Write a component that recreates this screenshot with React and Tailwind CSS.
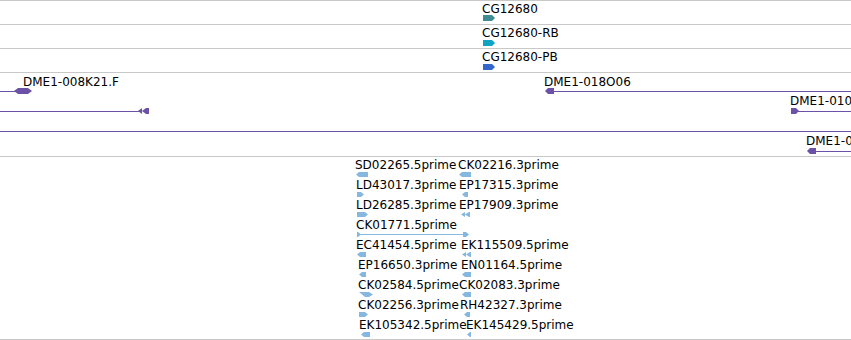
import React from "react";

const PURPLE = "#6c52a6";
const EST = "#86b7de";

function shapePoints(type, w, h) {
  const m = h / 2;
  switch (type) {
    case "right":
      return [`0,0 ${w - 3},0 ${w},${m} ${w - 3},${h} 0,${h}`];
    case "left":
      return [`0,${m} 3,0 ${w},0 ${w},${h} 3,${h}`];
    case "both":
      return [`0,${m} 4,0 ${w - 4},0 ${w},${m} ${w - 4},${h} 4,${h}`];
    case "dleft":
      return [`0,${m} 4,0 4,${h}`, `4,${m} 8,0 ${w},0 ${w},${h} 8,${h}`];
    case "dright":
      return [`0,0 ${w - 8},0 ${w - 4},${m} ${w - 8},${h}`, `${w - 8},0 ${w - 4},0 ${w},${m} ${w - 4},${h} ${w - 8},${h}`];
    default:
      return [`0,0 ${w},0 ${w},${h} 0,${h}`];
  }
}

function Glyph({ x, y, w, h, type, color }) {
  return (
    <svg
      className="absolute block"
      width={w}
      height={h}
      viewBox={`0 0 ${w} ${h}`}
      style={{ left: x, top: y }}
    >
      {shapePoints(type, w, h).map((p, i) => (
        <polygon key={i} points={p} fill={color} />
      ))}
    </svg>
  );
}

function Line({ x, y, w, color }) {
  return (
    <div className="absolute h-px" style={{ left: x, top: y, width: w, background: color }} />
  );
}

function Label({ x, y, children }) {
  return (
    <div className="absolute whitespace-nowrap" style={{ left: x, top: y }}>
      {children}
    </div>
  );
}

function GeneTrack({ name, color, gy }) {
  return (
    <div className="relative h-[24px] border-b border-[#c8c8c8]">
      <Label x={482} y={1}>{name}</Label>
      <Glyph x={483} y={gy} w={12} h={6} type="right" color={color} />
    </div>
  );
}

const estRows = [
  { l: ["SD02265.5prime", 355, 356, 12, "left"], r: ["CK02216.3prime", 458, 459, 12, "left"] },
  { l: ["LD43017.3prime", 356, 357, 7, "right"], r: ["EP17315.3prime", 459, 462, 6, "left"] },
  { l: ["LD26285.3prime", 356, 357, 11, "right"], r: ["EP17909.3prime", 459, 461, 9, "dleft"] },
  { l: ["CK01771.5prime", 356, null, 0, "span"], r: null },
  { l: ["EC41454.5prime", 356, 357, 9, "left"], r: ["EK115509.5prime", 461, 462, 9, "dleft"] },
  { l: ["EP16650.3prime", 358, 359, 7, "left"], r: ["EN01164.5prime", 461, 462, 9, "left"] },
  { l: ["CK02584.5prime", 358, 359, 14, "dright"], r: ["CK02083.3prime", 459, 462, 9, "left"] },
  { l: ["CK02256.3prime", 358, 359, 9, "right"], r: ["RH42327.3prime", 460, 464, 6, "left"] },
  { l: ["EK105342.5prime", 359, 361, 9, "left"], r: ["EK145429.5prime", 466, 467, 4, "left"] },
];

export default function App() {
  return (
    <div className="w-[851px] h-[340px] overflow-hidden bg-white text-black text-[12px] leading-[14px] font-['DejaVu_Sans',sans-serif]">
      <div className="flex flex-col border-t border-[#c8c8c8]">
        <GeneTrack name="CG12680" color="#3f8b93" gy={14} />
        <GeneTrack name="CG12680-RB" color="#0fa3c4" gy={15} />
        <GeneTrack name="CG12680-PB" color="#3367cc" gy={15} />

        <div className="relative h-[84px] border-b border-[#c8c8c8] overflow-hidden">
          <Label x={23} y={2}>DME1-008K21.F</Label>
          <Line x={0} y={18} w={16} color={PURPLE} />
          <Glyph x={14} y={15} w={18} h={6} type="both" color={PURPLE} />

          <Line x={0} y={38} w={140} color={PURPLE} />
          <Glyph x={138} y={35} w={11} h={6} type="dleft" color={PURPLE} />

          <Line x={0} y={58} w={851} color={PURPLE} />

          <Label x={544} y={2}>DME1-018O06</Label>
          <Line x={548} y={18} w={303} color={PURPLE} />
          <Glyph x={545} y={15} w={9} h={6} type="left" color={PURPLE} />

          <Label x={790} y={21}>DME1-010H12</Label>
          <Line x={795} y={38} w={56} color={PURPLE} />
          <Glyph x={791} y={35} w={8} h={6} type="right" color={PURPLE} />

          <Label x={806} y={61}>DME1-022B04</Label>
          <Line x={810} y={78} w={41} color={PURPLE} />
          <Glyph x={807} y={75} w={9} h={6} type="left" color={PURPLE} />
        </div>

        <div className="flex h-[183px] flex-col border-b border-[#c8c8c8] pt-px">
          {estRows.map((row, k) => (
            <div key={k} className="relative h-[20px] shrink-0">
              <Label x={row.l[1]} y={0}>{row.l[0]}</Label>
              {row.l[4] === "span" ? (
                <>
                  <Line x={357} y={16} w={109} color={EST} />
                  <Glyph x={357} y={14} w={4} h={5} type="right" color={EST} />
                  <Glyph x={463} y={14} w={6} h={5} type="right" color={EST} />
                </>
              ) : (
                <Glyph x={row.l[2]} y={14} w={row.l[3]} h={5} type={row.l[4]} color={EST} />
              )}
              {row.r && (
                <>
                  <Label x={row.r[1]} y={0}>{row.r[0]}</Label>
                  <Glyph x={row.r[2]} y={14} w={row.r[3]} h={5} type={row.r[4]} color={EST} />
                </>
              )}
            </div>
          ))}
        </div>
      </div>
    </div>
  );
}
